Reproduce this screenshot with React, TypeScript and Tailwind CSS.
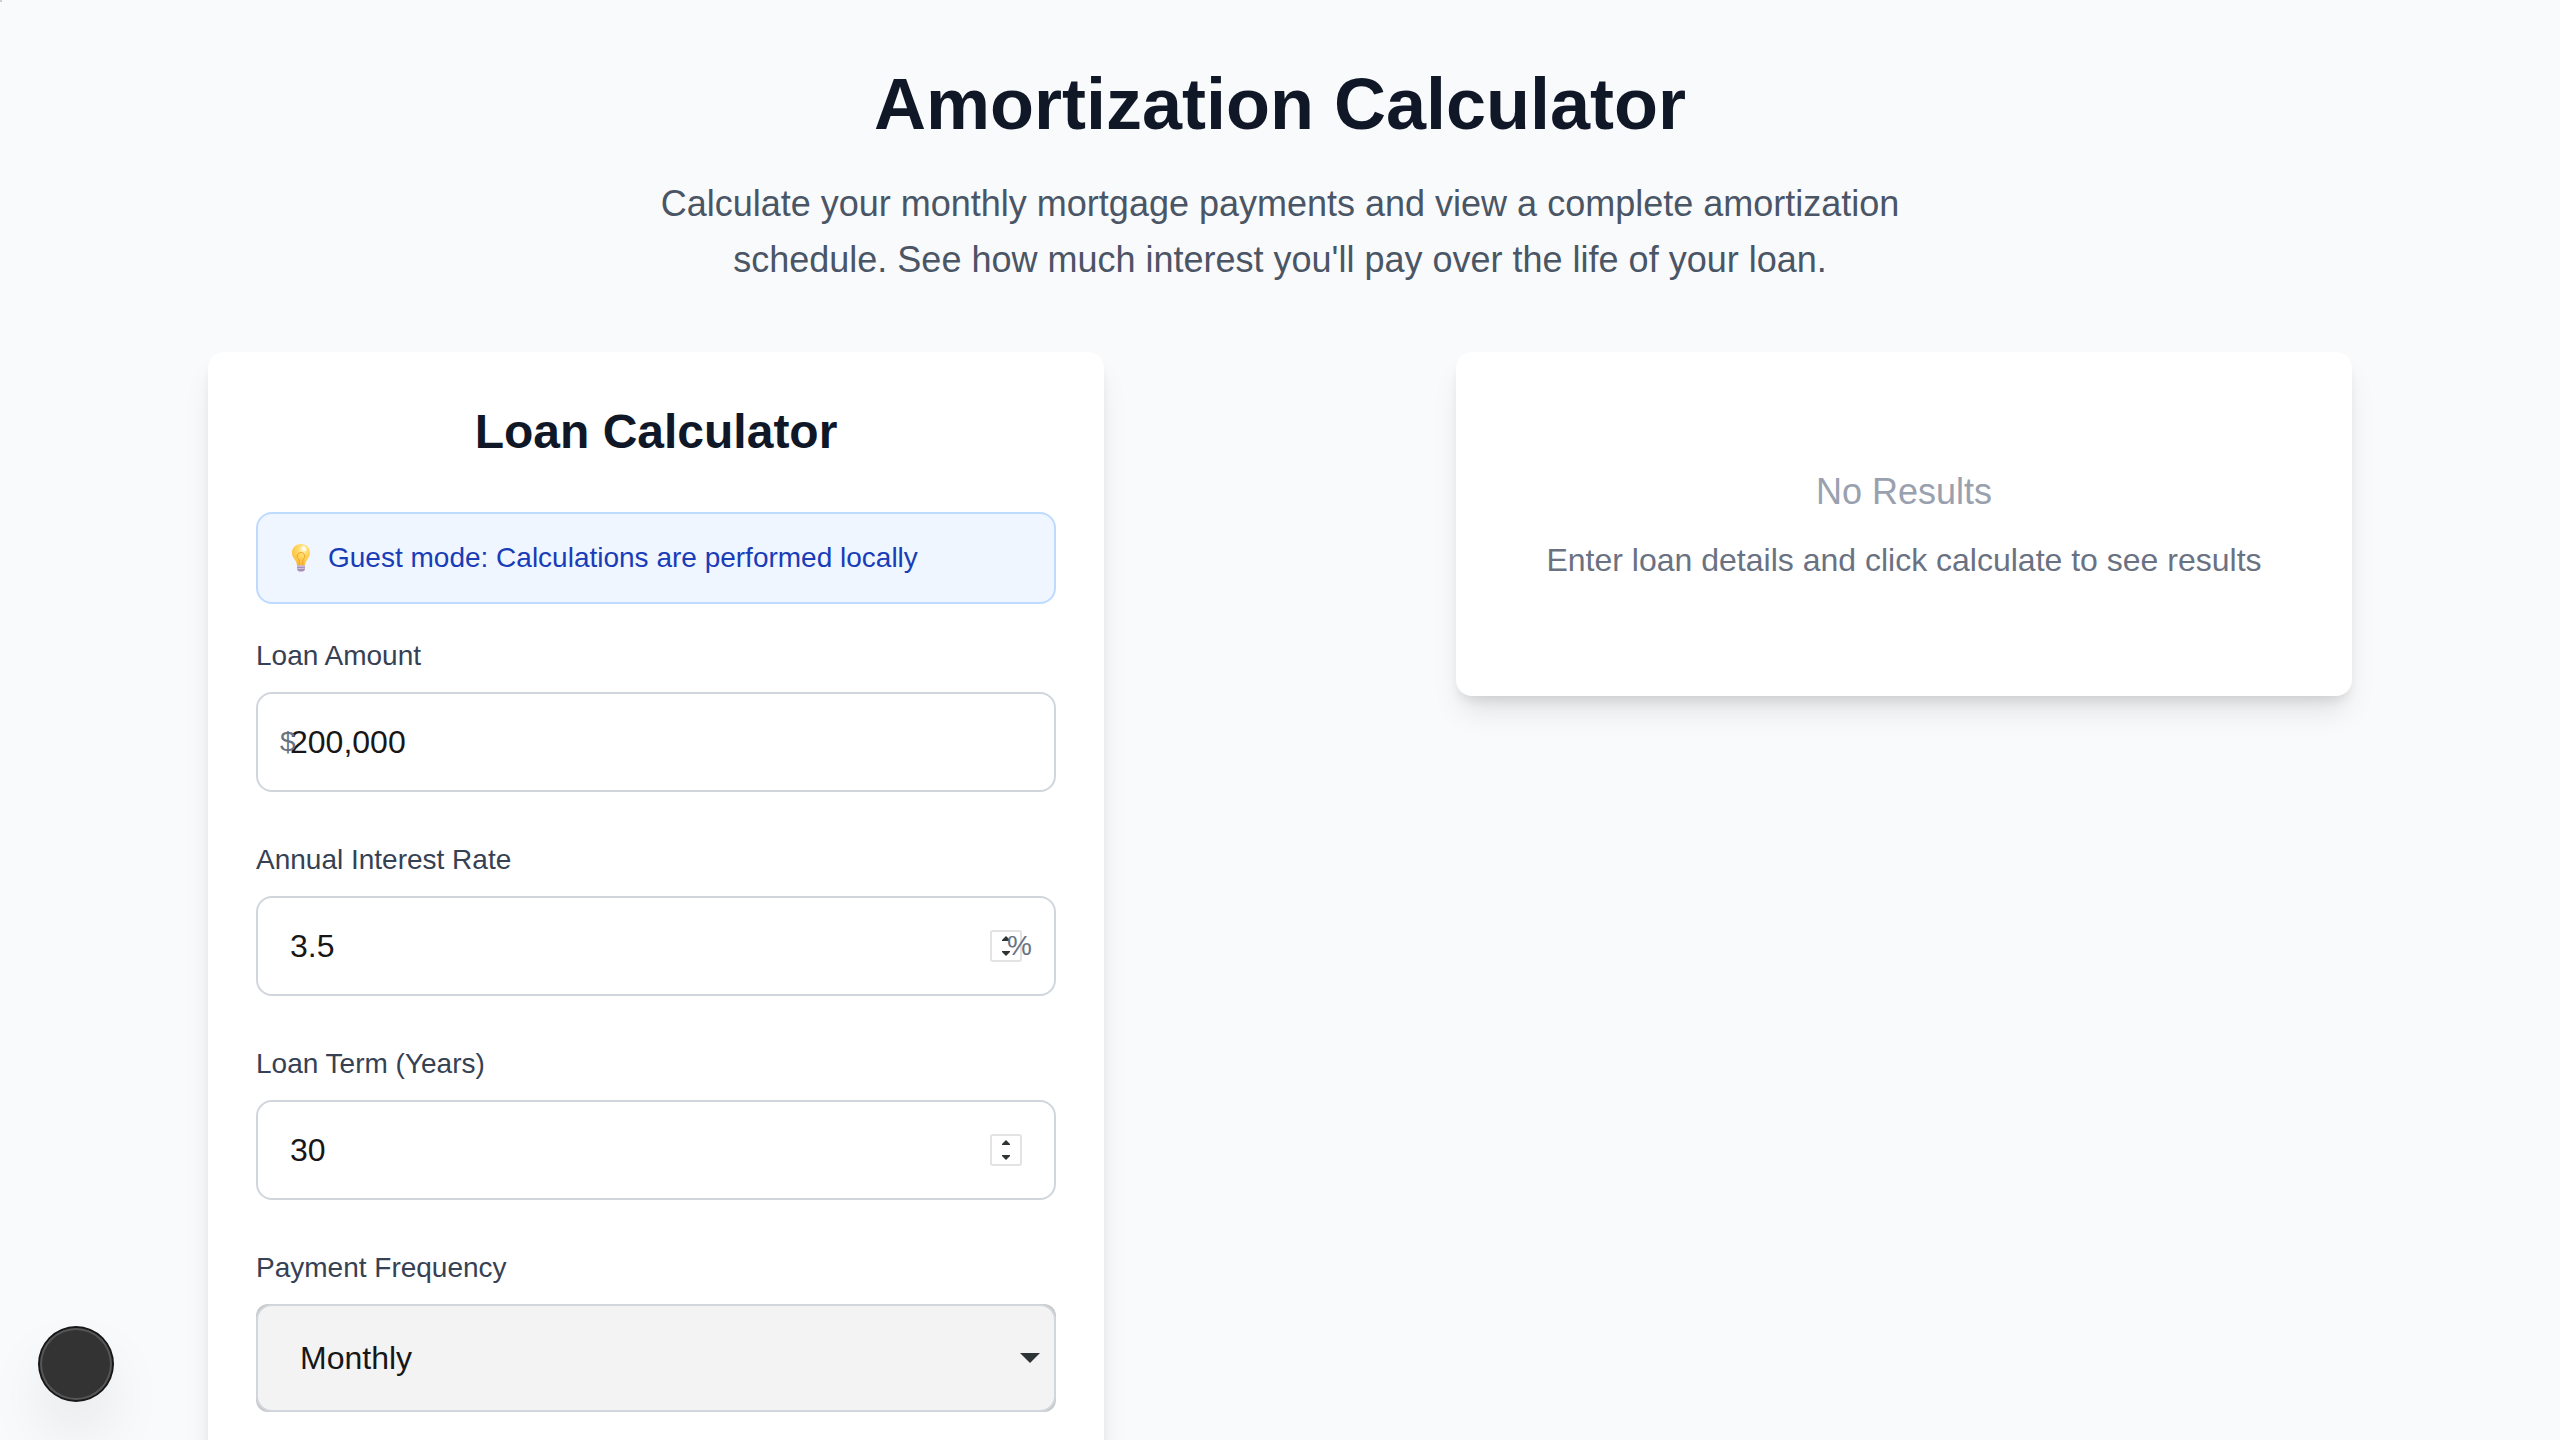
import { useState } from "react";
import type { ReactNode } from "react";

const inputClass =
  "block w-full rounded-[16px] border-2 border-gray-300 bg-white px-8 py-6 text-[32px] leading-[48px] text-[#171717] outline-none [appearance:textfield] [&::-webkit-inner-spin-button]:appearance-none [&::-webkit-outer-spin-button]:appearance-none";

const cardClass =
  "w-full max-w-[896px] rounded-[16px] bg-white p-12 shadow-[0_20px_30px_-6px_rgb(0_0_0/0.1),0_8px_12px_-4px_rgb(0_0_0/0.1)]";

function Field({ id, label, children }: { id: string; label: string; children: ReactNode }) {
  return (
    <div>
      <label htmlFor={id} className="mb-4 block text-[28px] leading-10 text-gray-700">
        {label}
      </label>
      <div className="relative">{children}</div>
    </div>
  );
}

function Spinner() {
  return (
    <div
      aria-hidden="true"
      className="pointer-events-none absolute inset-y-0 right-[34px] flex items-center"
    >
      <svg width="32" height="32" viewBox="0 0 32 32">
        <rect x="1" y="1" width="30" height="30" rx="2" fill="#fff" stroke="#e3e3e3" strokeWidth="2" />
        <path d="M12 11V10L16 6L20 10V11Z" fill="#2e3436" />
        <path d="M12 21V22L16 26L20 22V21Z" fill="#2e3436" />
      </svg>
    </div>
  );
}

function Bulb() {
  return (
    <svg width="38" height="28" viewBox="0 0 38 28" aria-hidden="true">
      <defs>
        <radialGradient id="bulb-glass" cx="0.62" cy="0.25" r="0.8">
          <stop offset="0" stopColor="#fff6cf" />
          <stop offset="0.35" stopColor="#ffdb66" />
          <stop offset="1" stopColor="#fdb731" />
        </radialGradient>
      </defs>
      <path
        d="M19 0C13.8 0 10 3.9 10 8.8C10 12 11.4 13.8 13 16C14.2 17.8 14.8 19.4 15 21.4H23C23.2 19.4 23.8 17.8 25 16C26.6 13.8 28 12 28 8.8C28 3.9 24.2 0 19 0Z"
        fill="url(#bulb-glass)"
      />
      <path
        d="M17.2 21V15.6C15.2 14.6 15 12.6 15.4 11.2C16 9.2 17.4 8.6 19 8.6C20.6 8.6 22 9.2 22.6 11.2C23 12.6 22.8 14.6 20.8 15.6V21"
        fill="none"
        stroke="#f0a12c"
        strokeWidth="1"
      />
      <ellipse cx="22" cy="4.6" rx="2.6" ry="2" transform="rotate(35 22 4.6)" fill="#fffbe9" />
      <path d="M15 21.4H23V25.4C22.6 26.6 21.4 26.8 20.8 27.6H17.2C16.6 26.8 15.4 26.6 15 25.4Z" fill="#a58fb4" />
      <path d="M15 22.4L23 22M15 24.8L23 24.2" stroke="#d9cbe2" strokeWidth="0.9" />
    </svg>
  );
}

export default function App() {
  const [amount, setAmount] = useState("200,000");
  const [rate, setRate] = useState("3.5");
  const [years, setYears] = useState("30");
  const [frequency, setFrequency] = useState("monthly");

  return (
    <div className="relative h-screen overflow-y-auto bg-gray-50 font-['Liberation_Sans',Arial,sans-serif] [scrollbar-width:none]">
      <span className="absolute top-0 left-0 size-0.5 bg-[#cccccc]" />
      <main className="mx-auto max-w-[2560px] px-16 py-16">
        <header className="mb-16 text-center">
          <h1 className="mb-8 text-[72px] leading-[80px] font-bold text-gray-900">
            Amortization Calculator
          </h1>
          <p className="mx-auto max-w-[1344px] text-[36px] leading-[56px] text-gray-600">
            Calculate your monthly mortgage payments and view a complete amortization schedule. See
            how much interest you'll pay over the life of your loan.
          </p>
        </header>

        <div className="grid grid-cols-2 items-start justify-items-center gap-16">
          <section className={cardClass}>
            <h2 className="mb-12 text-center text-[48px] leading-[64px] font-bold text-gray-900">
              Loan Calculator
            </h2>
            <div className="mb-8 flex items-center gap-2 rounded-[16px] border-2 border-blue-200 bg-blue-50 p-6">
              <Bulb />
              <p className="text-[28px] leading-10 text-blue-800">
                Guest mode: Calculations are performed locally
              </p>
            </div>
            <form className="flex flex-col gap-12">
              <Field id="amount" label="Loan Amount">
                <input
                  id="amount"
                  type="text"
                  value={amount}
                  onChange={(e) => setAmount(e.target.value)}
                  className={inputClass}
                />
                <span className="pointer-events-none absolute inset-y-0 left-6 flex items-center text-[28px] leading-10 text-gray-500">
                  $
                </span>
              </Field>
              <Field id="rate" label="Annual Interest Rate">
                <input
                  id="rate"
                  type="number"
                  step="0.1"
                  value={rate}
                  onChange={(e) => setRate(e.target.value)}
                  className={inputClass}
                />
                <Spinner />
                <span className="pointer-events-none absolute inset-y-0 right-6 flex items-center text-[28px] leading-10 text-gray-500">
                  %
                </span>
              </Field>
              <Field id="years" label="Loan Term (Years)">
                <input
                  id="years"
                  type="number"
                  value={years}
                  onChange={(e) => setYears(e.target.value)}
                  className={inputClass}
                />
                <Spinner />
              </Field>
              <Field id="frequency" label="Payment Frequency">
                <div className="rounded-[12px] bg-[#c8c8c8]">
                  <select
                    id="frequency"
                    value={frequency}
                    onChange={(e) => setFrequency(e.target.value)}
                    className="block w-full appearance-none rounded-[16px] border-2 border-gray-300 bg-[#f3f3f3] px-[42px] py-7 text-[32px] leading-[48px] text-[#171717] outline-none"
                  >
                    <option value="monthly">Monthly</option>
                  </select>
                </div>
                <div className="pointer-events-none absolute inset-y-0 right-4 flex items-center">
                  <svg width="20" height="10" viewBox="0 0 20 10" aria-hidden="true">
                    <path d="M0 0H20L10 10Z" fill="#2e3436" />
                  </svg>
                </div>
              </Field>
            </form>
          </section>

          <section className={cardClass}>
            <div className="py-16 text-center">
              <h3 className="mb-4 text-[36px] leading-[56px] text-gray-400">No Results</h3>
              <p className="text-[32px] leading-[48px] text-gray-500">
                Enter loan details and click calculate to see results
              </p>
            </div>
          </section>
        </div>
      </main>

      <button
        type="button"
        aria-label="Open developer tools"
        className="fixed bottom-10 left-10 size-[72px] rounded-full bg-[#333333] shadow-[0_0_0_2px_#171717,inset_0_0_0_2px_#565656,0_32px_64px_-8px_rgb(0_0_0/0.14)]"
      />
    </div>
  );
}
